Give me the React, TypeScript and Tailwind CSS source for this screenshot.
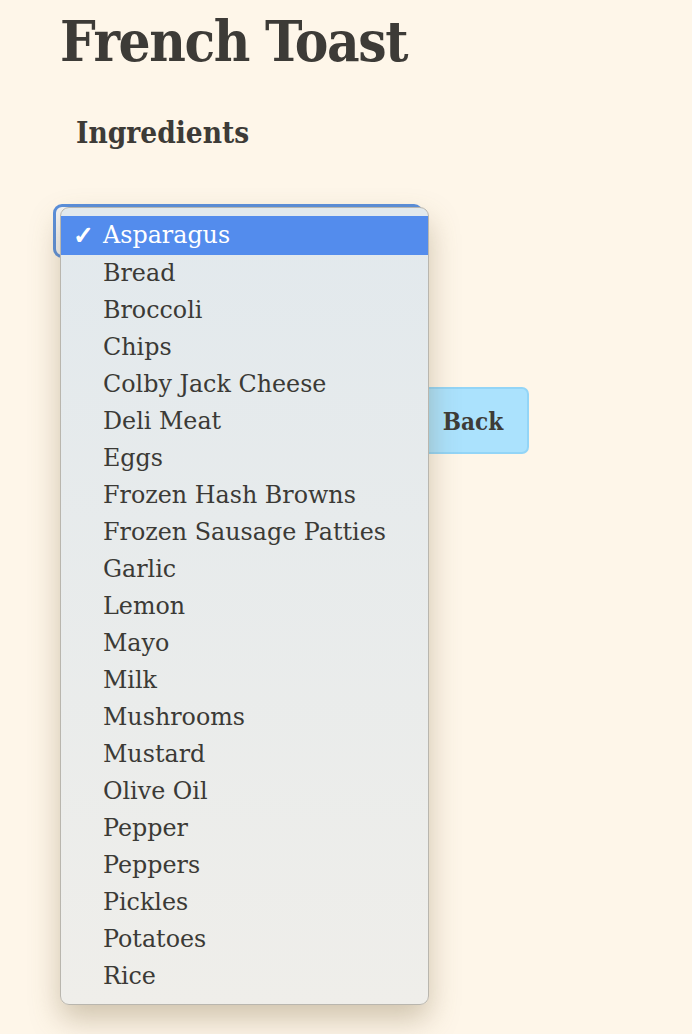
const ingredients = [
  "Asparagus",
  "Bread",
  "Broccoli",
  "Chips",
  "Colby Jack Cheese",
  "Deli Meat",
  "Eggs",
  "Frozen Hash Browns",
  "Frozen Sausage Patties",
  "Garlic",
  "Lemon",
  "Mayo",
  "Milk",
  "Mushrooms",
  "Mustard",
  "Olive Oil",
  "Pepper",
  "Peppers",
  "Pickles",
  "Potatoes",
  "Rice",
];

const slab = { fontFamily: '"DejaVu Serif Condensed", "DejaVu Serif", serif' };

function OptionList({ options, selected }: { options: string[]; selected: string }) {
  return (
    <div
      className="absolute left-[7px] top-[3px] z-10 w-[369px] rounded-[9px] border border-[#b9b6ae] bg-gradient-to-b from-[#e2e9ed] to-[#efeeea] pb-[9px] pt-[8px] shadow-[0_14px_30px_rgba(120,100,60,0.35)]"
      style={{ fontFamily: '"DejaVu Serif", serif' }}
    >
      {options.map((item) => {
        const isSelected = item === selected;
        return (
          <div
            key={item}
            className={
              isSelected
                ? "flex h-[39px] items-center bg-[#538ced] text-white"
                : "flex h-[37px] items-center text-[#3b3a36]"
            }
          >
            <span className="w-[42px] pl-[12px] text-[25px] font-bold">
              {isSelected ? "✓" : ""}
            </span>
            <span className="text-[23.8px] leading-none">{item}</span>
          </div>
        );
      })}
    </div>
  );
}

export default function App() {
  return (
    <div className="min-h-[1034px] w-full bg-[#fef6e9] text-[#3d3b37]">
      <div className="flex flex-col pl-[60px] pt-[6px]">
        <h1 className="text-[56px] font-bold leading-[70px] tracking-[-1.4px]" style={slab}>
          French Toast
        </h1>
        <h2 className="mt-[40px] pl-[16px] text-[29.5px] font-bold leading-[34px]" style={slab}>
          Ingredients
        </h2>

        <div className="relative ml-[-7px] mt-[54px] w-[370px]">
          {/* the select itself, focused, mostly hidden under its open list */}
          <div className="h-[54px] w-full rounded-[9px] border-[3px] border-[#5a8fdc] bg-[#f4f4f4]" />
          <OptionList options={ingredients} selected="Asparagus" />
        </div>

        <div className="mt-[129px] flex pl-[357px]">
          <button
            className="h-[67px] w-[112px] rounded-[7px] border-2 border-[#93d5f7] bg-[#abe2fd] pt-[3px] text-[24px] font-bold text-[#3d3b37]"
            style={slab}
          >
            Back
          </button>
        </div>
      </div>
    </div>
  );
}
